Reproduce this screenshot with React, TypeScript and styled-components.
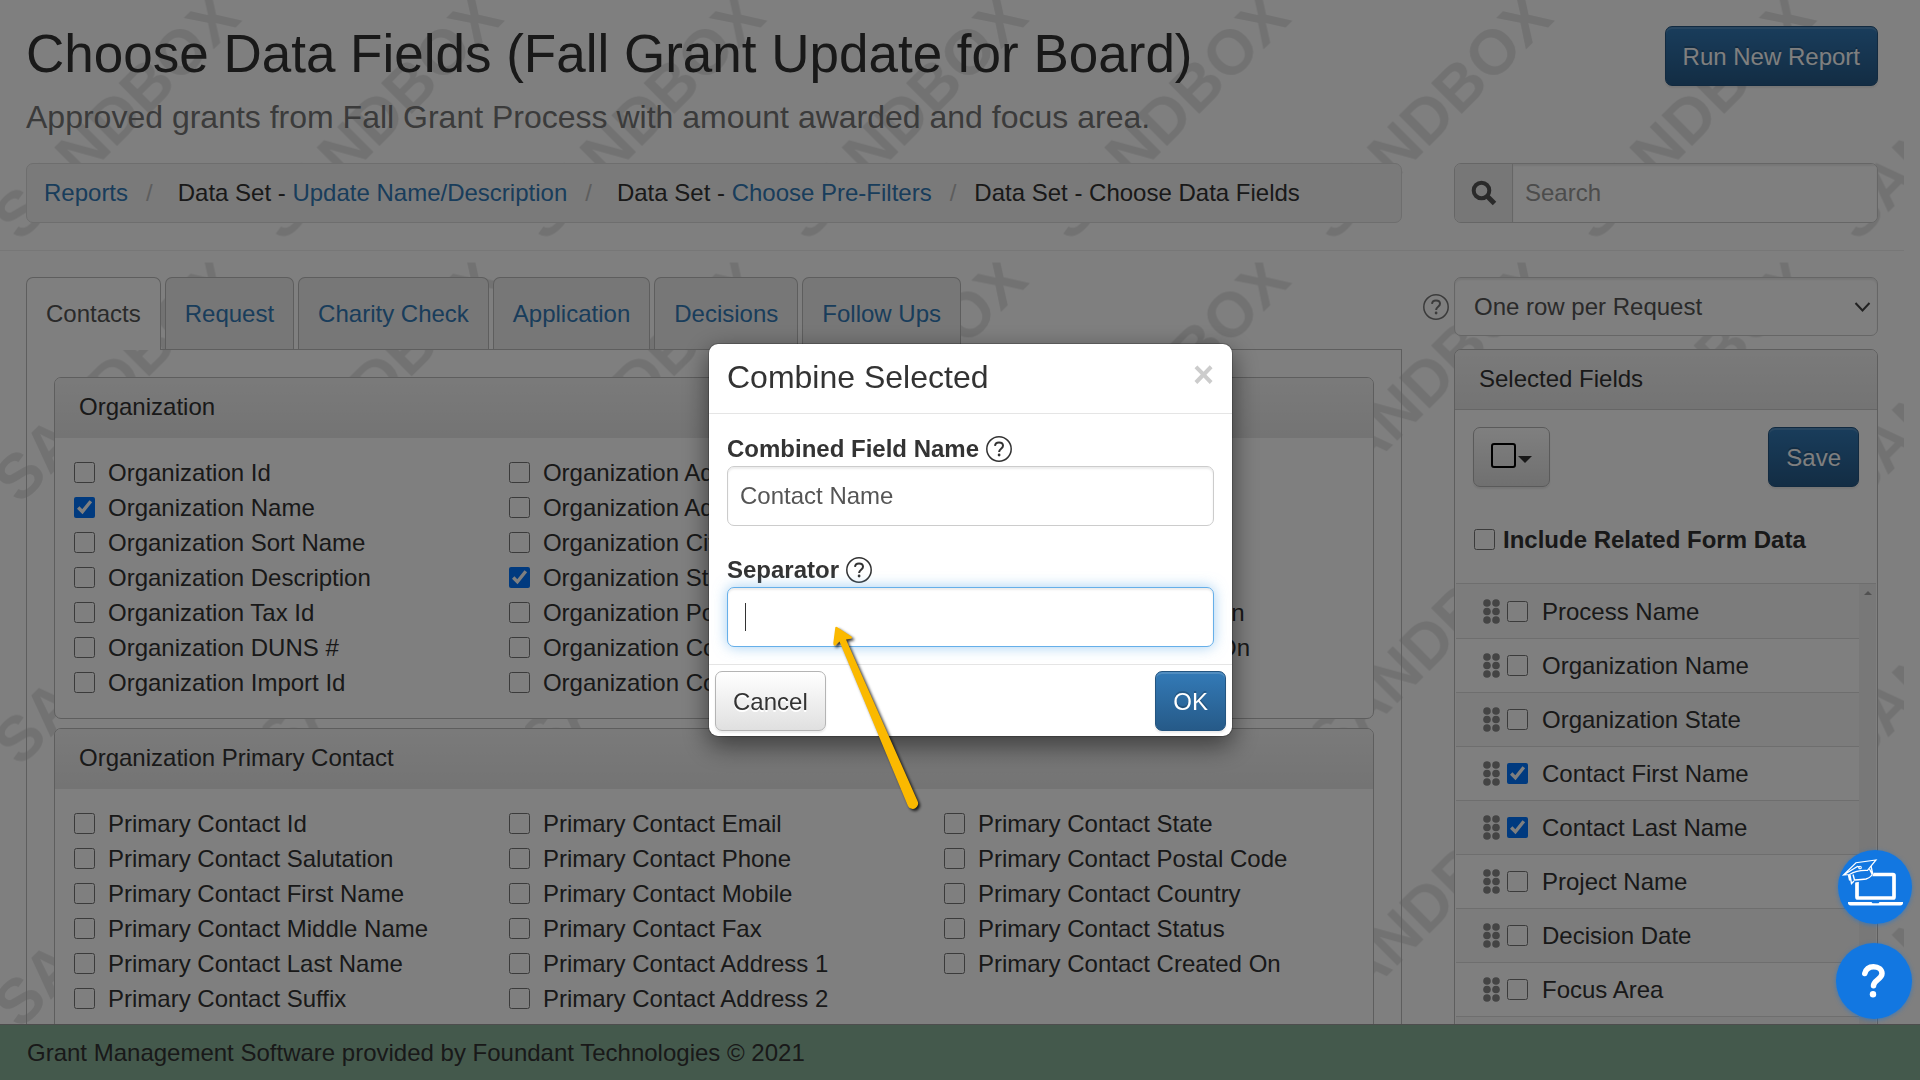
import React from "react";
import styled, { createGlobalStyle, css } from "styled-components";

const BORDER = "#bcbcbc";
const LINK = "#337ab7";

const GlobalStyle = createGlobalStyle`
  *, *::before, *::after { box-sizing: border-box; }
  html, body { margin: 0; height: 100%; overflow: hidden; }
  body {
    font-family: "Liberation Sans", Arial, Helvetica, sans-serif;
    font-size: 24px;
    line-height: 35px;
    color: #333;
    background: #fff;
  }
  button, input, select { font: inherit; color: inherit; }
  h1, h2, p, ul, ol { margin: 0; padding: 0; font-weight: 400; }
  ul, ol { list-style: none; }
  a { color: ${LINK}; text-decoration: none; }
`;

const Shell = styled.div`
  display: flex;
  flex-direction: column;
  height: 100vh;
`;

const Page = styled.main`
  position: relative;
  flex: 1;
  min-height: 0;
  overflow: hidden;
  margin-right: 16px;
`;

const WatermarkLayer = styled.svg`
  position: absolute;
  inset: 0;
  width: 100%;
  height: 100%;
`;

const Content = styled.div`
  position: relative;
`;

const Columns = styled.div`
  display: grid;
  grid-template-columns: minmax(0, 3fr) minmax(0, 1fr);
`;

const Column = styled.div<{ $end?: boolean }>`
  padding: 0 26px;
  ${(p) => p.$end && css`text-align: right;`}
`;

const Header = styled.header`
  padding: 26px 0 27px;
  border-bottom: 1px solid #eee;
`;

const Title = styled.h1`
  font-size: 53px;
  line-height: 56px;
  white-space: nowrap;
`;

const Subtitle = styled.p`
  margin: 13px 0 24px;
  font-size: 32px;
  line-height: 44px;
  color: #777;
  white-space: nowrap;
`;

const Button = styled.button<{ $primary?: boolean }>`
  height: 60px;
  padding: 0 17px;
  border: 1px solid ${(p) => (p.$primary ? "#245580" : "#b4b4b4")};
  border-radius: 7px;
  color: ${(p) => (p.$primary ? "#fff" : "#333")};
  background: ${(p) =>
    p.$primary
      ? "linear-gradient(#337ab7, #265a88)"
      : "linear-gradient(#fff, #e0e0e0)"};
  text-shadow: ${(p) =>
    p.$primary ? "0 -2px 0 rgba(0,0,0,.2)" : "0 2px 0 #fff"};
  box-shadow: inset 0 2px 0 rgba(255, 255, 255, 0.15), 0 2px 2px rgba(0, 0, 0, 0.08);
  white-space: nowrap;
`;

const Breadcrumb = styled.ol`
  display: flex;
  align-items: center;
  height: 60px;
  padding: 0 17px 2px;
  border: 1px solid #dcdcdc;
  border-radius: 7px;
  background: #f5f5f5;
  white-space: nowrap;
`;

const Crumb = styled.li<{ $wide?: boolean }>`
  &:not(:first-child)::before {
    content: "/";
    color: #bbb;
    margin: 0 ${(p) => (p.$wide ? 25 : 18)}px 0 18px;
  }
`;

const SearchGroup = styled.div`
  display: flex;
  height: 60px;
  border: 1px solid #ccc;
  border-radius: 7px;
  overflow: hidden;
  background: #fff;
`;

const SearchAddon = styled.label`
  display: flex;
  align-items: center;
  justify-content: center;
  width: 58px;
  border-right: 1px solid #ccc;
  background: #eee;
`;

const SearchInput = styled.input`
  flex: 1;
  min-width: 0;
  padding: 0 12px 2px;
  border: 0;
  outline: 0;
  background: #fff;
  box-shadow: inset 0 2px 2px rgba(0, 0, 0, 0.075);
  &::placeholder { color: #999; }
`;

const Body = styled(Columns)`
  padding-top: 26px;
`;

const Tabs = styled.ul`
  display: flex;
  gap: 4px;
  height: 73px;
  border-bottom: 1px solid ${BORDER};
`;

const Tab = styled.li<{ $active?: boolean }>`
  height: ${(p) => (p.$active ? 73 : 72)}px;
  border: 1px solid ${BORDER};
  border-bottom: 0;
  border-radius: 7px 7px 0 0;
  background: ${(p) => (p.$active ? "#fff" : "#eee")};
  a {
    display: block;
    padding: 18px 19px;
    white-space: nowrap;
    color: ${(p) => (p.$active ? "#555" : LINK)};
  }
`;

const TabPane = styled.div`
  padding: 27px;
  border: 1px solid ${BORDER};
  border-top: 0;
`;

const Panel = styled.section`
  margin-bottom: 9px;
  border: 1px solid ${BORDER};
  border-radius: 7px;
  background: #fff;
  overflow: hidden;
`;

const PanelHeading = styled.h2<{ $ruled?: boolean }>`
  height: 60px;
  padding: 11px 24px;
  font-size: 24px;
  line-height: 35px;
  background: linear-gradient(#f5f5f5, #e8e8e8);
  ${(p) => p.$ruled && css`border-bottom: 1px solid #ccc;`}
`;

const FieldColumns = styled.div`
  display: grid;
  grid-template-columns: repeat(3, 33%);
  padding: 17px 0 18px;
`;

const FieldLabel = styled.label`
  display: flex;
  align-items: center;
  gap: 13px;
  height: 35px;
  padding-left: 19px;
  white-space: nowrap;
`;

const Check = styled.input.attrs({ type: "checkbox" })`
  flex: none;
  width: 21px;
  height: 21px;
  margin: 0;
  accent-color: #0075ff;
`;

const SelectRow = styled.div`
  display: flex;
  align-items: center;
  gap: 5px;
  margin: 0 0 13px -31px;
`;

const SelectBox = styled.div`
  position: relative;
  flex: 1;
  svg {
    position: absolute;
    right: 7px;
    top: 24px;
    pointer-events: none;
  }
`;

const Select = styled.select`
  display: block;
  width: 100%;
  height: 59px;
  padding: 0 19px;
  appearance: none;
  border: 1px solid #ccc;
  border-radius: 7px;
  background: #fff;
  color: #555;
  box-shadow: inset 0 2px 2px rgba(0, 0, 0, 0.075);
`;

const Toolbar = styled.div`
  display: flex;
  justify-content: space-between;
  padding: 17px 18px 35px;
`;

const MenuButton = styled(Button)`
  display: flex;
  align-items: center;
  gap: 2px;
`;

const MenuSquare = styled.span`
  width: 25px;
  height: 25px;
  margin-bottom: 4px;
  border: 2px solid #000;
  border-radius: 3px;
`;

const Caret = styled.span`
  margin-top: 4px;
  border: 7px solid transparent;
  border-top-color: #333;
  border-bottom: 0;
`;

const IncludeLabel = styled.label`
  display: flex;
  align-items: center;
  gap: 8px;
  height: 35px;
  margin: 0 19px 26px;
  font-weight: 700;
  white-space: nowrap;
`;

const ListArea = styled.div`
  display: flex;
  margin: 0 1px;
  border-top: 1px solid #ddd;
`;

const List = styled.ul`
  flex: 1;
`;

const ListItem = styled.li`
  display: flex;
  align-items: center;
  gap: 7px;
  height: 54px;
  padding-left: 27px;
  border-bottom: 1px solid #ddd;
  white-space: nowrap;
  &:first-child { height: 55px; }
  &:nth-child(odd) { background: #f9f9f9; }
  label {
    display: flex;
    align-items: center;
    gap: 14px;
  }
`;

const ScrollTrack = styled.div`
  display: flex;
  justify-content: center;
  width: 17px;
  background: #f1f1f1;
  &::before {
    content: "";
    height: 4px;
    margin-top: 7px;
    border: 4px solid transparent;
    border-top: 0;
    border-bottom-color: #a3a3a3;
  }
`;

const Footer = styled.footer`
  height: 56px;
  padding: 10px 27px;
  border-top: 1px solid #9a9a9a;
  background: #88b298;
`;

const Backdrop = styled.div`
  position: fixed;
  inset: 0;
  display: flex;
  justify-content: center;
  align-items: flex-start;
  padding: 343px 0 0 21px;
  background: rgba(0, 0, 0, 0.5);
`;

const Dialog = styled.div`
  width: 525px;
  border: 1px solid rgba(0, 0, 0, 0.2);
  border-radius: 10px;
  background: #fff;
  background-clip: padding-box;
  box-shadow: 0 9px 26px rgba(0, 0, 0, 0.5);
`;

const DialogHeader = styled.div`
  display: flex;
  justify-content: space-between;
  align-items: flex-start;
  padding: 11px 18px 13px;
  border-bottom: 1px solid #e5e5e5;
`;

const DialogTitle = styled.h2`
  font-size: 32px;
  line-height: 45px;
`;

const CloseButton = styled.button`
  padding: 0;
  border: 0;
  background: none;
  font-size: 36px;
  font-weight: 700;
  line-height: 40px;
  color: #ccc;
`;

const DialogBody = styled.div`
  display: flex;
  flex-direction: column;
  gap: 26px;
  padding: 17px 18px;
`;

const LabelRow = styled.div`
  display: flex;
  align-items: center;
  gap: 7px;
  height: 35px;
  font-weight: 700;
`;

const InputWrap = styled.div<{ $focused?: boolean }>`
  position: relative;
  ${(p) =>
    p.$focused &&
    css`
      &::after {
        content: "";
        position: absolute;
        left: 18px;
        top: 16px;
        width: 1px;
        height: 28px;
        background: #333;
      }
    `}
`;

const TextInput = styled.input<{ $focused?: boolean }>`
  display: block;
  width: 100%;
  height: 60px;
  padding: 0 12px;
  border: 1px solid ${(p) => (p.$focused ? "#66afe9" : "#ccc")};
  border-radius: 7px;
  outline: 0;
  color: #555;
  box-shadow: inset 0 2px 2px rgba(0, 0, 0, 0.075)
    ${(p) => p.$focused && ", 0 0 14px rgba(102, 175, 233, 0.6)"};
`;

const DialogFooter = styled.div`
  display: flex;
  justify-content: space-between;
  padding: 6px 6px 5px;
  border-top: 1px solid #e5e5e5;
`;

const Pointer = styled.svg`
  position: fixed;
  left: 810px;
  top: 600px;
  pointer-events: none;
`;

const FloatingActions = styled.div`
  position: fixed;
  right: 8px;
  bottom: 61px;
  display: flex;
  flex-direction: column;
  align-items: flex-end;
  gap: 19px;
`;

const Fab = styled.button<{ $size: number }>`
  width: ${(p) => p.$size}px;
  height: ${(p) => p.$size}px;
  padding: 0;
  border: 0;
  border-radius: 50%;
  background: #1277e1;
  box-shadow: 0 1px 4px rgba(18, 119, 225, 0.6);
  svg { display: block; }
`;

const Watermark = () => (
  <WatermarkLayer aria-hidden="true">
    <defs>
      <pattern id="sandbox" width="262.5" height="262.5" patternUnits="userSpaceOnUse">
        <text
          transform="translate(20 243) rotate(-45)"
          fontFamily="Liberation Sans, Arial, sans-serif"
          fontWeight="700"
          fontSize="63"
          fill="#e4e4e4"
        >
          SANDBOX
        </text>
      </pattern>
    </defs>
    <rect width="100%" height="100%" fill="url(#sandbox)" />
  </WatermarkLayer>
);

const HelpIcon = ({ color = "#333" }: { color?: string }) => (
  <svg width="26" height="26" viewBox="0 0 26 26" fill="none" stroke={color} role="img" aria-label="Help">
    <circle cx="13" cy="13" r="12.2" strokeWidth="1.5" />
    <path d="M9 9.8C9.2 7.6 10.8 6.4 13 6.4c2.300 0 4 1.300 4 3.300 0 3-3.900 3-3.900 6.200" strokeWidth="2" />
    <circle cx="13.100" cy="19" r="1.400" fill={color} stroke="none" />
  </svg>
);

const SearchIcon = () => (
  <svg width="26" height="26" viewBox="0 0 26 26" fill="none" stroke="#555">
    <circle cx="10.500" cy="10.500" r="7.800" strokeWidth="4" />
    <path d="M16.500 16.500l7 7" strokeWidth="5" />
  </svg>
);

const GripIcon = () => (
  <svg width="17" height="25" viewBox="0 0 17 25" fill="#888" aria-hidden="true">
    {[4, 12.5, 21].map((y) => (
      <g key={y}>
        <circle cx="4" cy={y} r="3.800" />
        <circle cx="13" cy={y} r="3.800" />
      </g>
    ))}
  </svg>
);

type Field = [string, boolean?];

const prefixed = (prefix: string, names: string[], checked: string[] = []): Field[] =>
  names.map((n) => [`${prefix} ${n}`, checked.includes(n)]);

const organization: Field[][] = [
  prefixed("Organization", ["Id", "Name", "Sort Name", "Description", "Tax Id", "DUNS #", "Import Id"], ["Name"]),
  prefixed("Organization", ["Address 1", "Address 2", "City", "State", "Postal Code", "Country", "County"], ["State"]),
  prefixed("Organization", ["Phone", "Fax", "Email", "Status", "Created On", "Modified On"]),
];

const primaryContact: Field[][] = [
  prefixed("Primary Contact", ["Id", "Salutation", "First Name", "Middle Name", "Last Name", "Suffix"]),
  prefixed("Primary Contact", ["Email", "Phone", "Mobile", "Fax", "Address 1", "Address 2"]),
  prefixed("Primary Contact", ["State", "Postal Code", "Country", "Status", "Created On"]),
];

const selected: Field[] = [
  ["Process Name"],
  ["Organization Name"],
  ["Organization State"],
  ["Contact First Name", true],
  ["Contact Last Name", true],
  ["Project Name"],
  ["Decision Date"],
  ["Focus Area"],
];

const FieldPanel = ({ title, columns }: { title: string; columns: Field[][] }) => (
  <Panel>
    <PanelHeading>{title}</PanelHeading>
    <FieldColumns>
      {columns.map((fields, i) => (
        <div key={i}>
          {fields.map(([name, on]) => (
            <FieldLabel key={name}>
              <Check defaultChecked={on} />
              {name}
            </FieldLabel>
          ))}
        </div>
      ))}
    </FieldColumns>
  </Panel>
);

const CombineDialog = () => (
  <Backdrop>
    <Dialog role="dialog" aria-labelledby="combine-title">
      <DialogHeader>
        <DialogTitle id="combine-title">Combine Selected</DialogTitle>
        <CloseButton aria-label="Close">×</CloseButton>
      </DialogHeader>
      <DialogBody>
        <div>
          <LabelRow>
            <label htmlFor="combined-name">Combined Field Name</label>
            <HelpIcon />
          </LabelRow>
          <InputWrap>
            <TextInput id="combined-name" defaultValue="Contact Name" />
          </InputWrap>
        </div>
        <div>
          <LabelRow>
            <label htmlFor="separator">Separator</label>
            <HelpIcon />
          </LabelRow>
          <InputWrap $focused>
            <TextInput id="separator" $focused defaultValue=" " />
          </InputWrap>
        </div>
      </DialogBody>
      <DialogFooter>
        <Button>Cancel</Button>
        <Button $primary>OK</Button>
      </DialogFooter>
    </Dialog>
  </Backdrop>
);

export default function App() {
  return (
    <>
      <GlobalStyle />
      <Shell>
        <Page>
          <Watermark />
          <Content>
            <Header>
              <Columns>
                <Column>
                  <Title>Choose Data Fields (Fall Grant Update for Board)</Title>
                  <Subtitle>Approved grants from Fall Grant Process with amount awarded and focus area.</Subtitle>
                </Column>
                <Column $end>
                  <Button $primary>Run New Report</Button>
                </Column>
              </Columns>
              <Columns>
                <Column>
                  <Breadcrumb>
                    <Crumb><a href="#reports">Reports</a></Crumb>
                    <Crumb $wide>Data Set - <a href="#description">Update Name/Description</a></Crumb>
                    <Crumb $wide>Data Set - <a href="#filters">Choose Pre-Filters</a></Crumb>
                    <Crumb>Data Set - Choose Data Fields</Crumb>
                  </Breadcrumb>
                </Column>
                <Column>
                  <SearchGroup>
                    <SearchAddon htmlFor="search" aria-label="Search"><SearchIcon /></SearchAddon>
                    <SearchInput id="search" placeholder="Search" />
                  </SearchGroup>
                </Column>
              </Columns>
            </Header>
            <Body>
              <Column>
                <Tabs>
                  {["Contacts", "Request", "Charity Check", "Application", "Decisions", "Follow Ups"].map((t, i) => (
                    <Tab key={t} $active={i === 0}><a href="#tab">{t}</a></Tab>
                  ))}
                </Tabs>
                <TabPane>
                  <FieldPanel title="Organization" columns={organization} />
                  <FieldPanel title="Organization Primary Contact" columns={primaryContact} />
                </TabPane>
              </Column>
              <Column>
                <SelectRow>
                  <HelpIcon color="#777" />
                  <SelectBox>
                    <Select aria-label="Row grouping">
                      <option>One row per Request</option>
                    </Select>
                    <svg width="17" height="12" viewBox="0 0 17 12" fill="none" stroke="#444" strokeWidth="2">
                      <path d="M1.500 2l7 7.500 7-7.500" />
                    </svg>
                  </SelectBox>
                </SelectRow>
                <Panel>
                  <PanelHeading $ruled>Selected Fields</PanelHeading>
                  <Toolbar>
                    <MenuButton aria-label="Selection menu"><MenuSquare /><Caret /></MenuButton>
                    <Button $primary>Save</Button>
                  </Toolbar>
                  <IncludeLabel><Check />Include Related Form Data</IncludeLabel>
                  <ListArea>
                    <List>
                      {selected.map(([name, on]) => (
                        <ListItem key={name}>
                          <GripIcon />
                          <label><Check defaultChecked={on} />{name}</label>
                        </ListItem>
                      ))}
                      <ListItem />
                    </List>
                    <ScrollTrack />
                  </ListArea>
                </Panel>
              </Column>
            </Body>
          </Content>
        </Page>
        <Footer>Grant Management Software provided by Foundant Technologies © 2021</Footer>
      </Shell>
      <CombineDialog />
      <Pointer width="130" height="220" viewBox="0 0 130 220" aria-hidden="true">
        <path
          d="M25.300 27.500Q25.500 26.300 27 27L41.500 36.500Q43 38.500 40.500 38.800L36 39.500 107.500 201A5.300 5.300 0 0 1 98 206L29.500 41.500 26 45Q23.300 47 23.300 43Z"
          fill="#fbb900"
          style={{ filter: "drop-shadow(2px 2px 1.500px rgba(0,0,0,.8))" }}
        />
      </Pointer>
      <FloatingActions>
        <Fab $size={74} aria-label="Training">
          <svg width="74" height="74" viewBox="0 0 74 74" fill="none" stroke="#fff">
            <rect x="19" y="24.500" width="37" height="23.500" rx="1" strokeWidth="3.700" />
            <path d="M10 52h23.500l1 1.200h6l1-1.200H65v1.500q-.5 2-2.500 2H12.500q-2 0-2.500-2z" fill="#fff" stroke="none" />
            <path d="M11 27l1-3 22-10 1.500 9q-2 8-9 8.500-9 0-14.500 3z" fill="#1277e1" stroke="none" />
            <path d="M5.500 25L18 12.700 38 10 29.500 20.500Q19 20 11.500 24.500zM5.500 25l14-8.500 2.500.5" strokeWidth="1.200" />
            <circle cx="22" cy="17.500" r="1.300" strokeWidth="1.100" />
            <path d="M15 24.500l1.500 5.500q8-.5 11.500-1 6-2 6.500-6l-1.500-7M12 25l1.500 8.500 2.500-2.500M10.500 25l1.200 5.500M31.500 19l2.500 5" strokeWidth="1.400" />
          </svg>
        </Fab>
        <Fab $size={76} aria-label="Help">
          <svg width="76" height="76" viewBox="0 0 76 76" fill="none" stroke="#fff" strokeWidth="5.500" strokeLinecap="round">
            <path d="M28.800 30.500C30 26 33 23.800 37.500 23.800c5 0 8.500 2.800 8.500 6.800 0 5.500-8.500 6.500-8.500 12.200" />
            <circle cx="37" cy="51.300" r="3.200" fill="#fff" stroke="none" />
          </svg>
        </Fab>
      </FloatingActions>
    </>
  );
}
